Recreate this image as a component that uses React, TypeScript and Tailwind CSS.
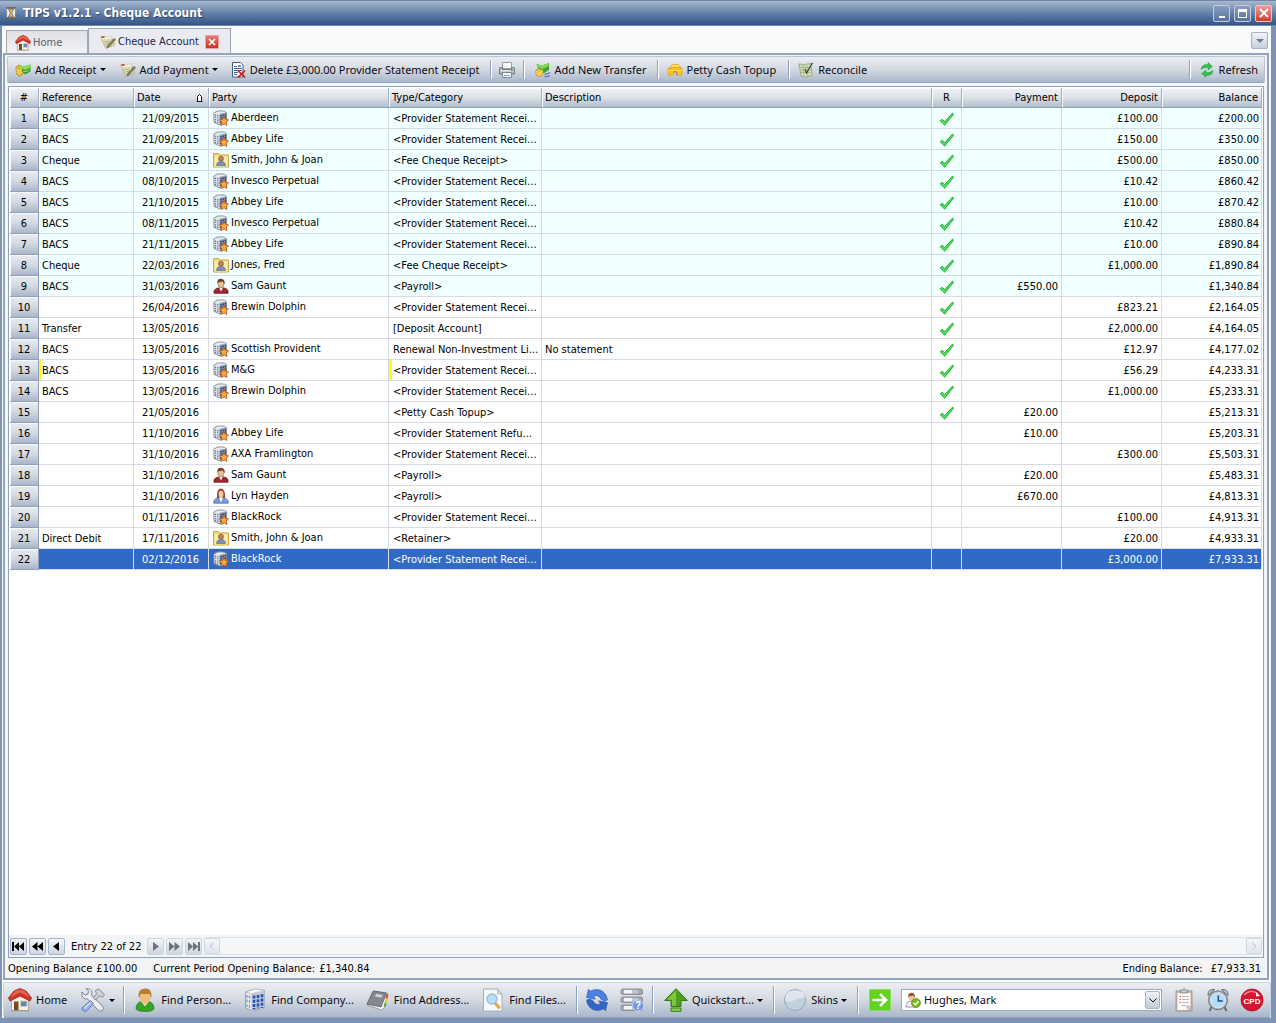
import React from 'react';

type IconProps = { className?: string };
type IconType = (props: IconProps) => React.JSX.Element;

function HouseIcon({ className }: IconProps) {
  return (
    <svg viewBox="0 0 24 24" className={className} aria-hidden="true">
      <path d="M3.500 10 12 6l8.500 4v12.500h-17z" fill="#f6f1e2" stroke="#b5a68c" />
      <path d="M6 3 12 .5 18 3l5.500 7-1.500 3L12 8 2 13 .5 10z" fill="#cf3527" stroke="#9c2219" strokeWidth=".8" />
      <path d="M6.500 3.500 12 1.300l5.500 2.200 4.500 6L12 4.500 2 9.500z" fill="#e56052" />
      <path d="M6 13.500h4.500v9H6z" fill="#7a4a24" />
      <path d="M12.500 13h6.500v5.500h-6.500z" fill="#5a86b8" stroke="#d8d2c2" />
      <path d="M3 22.800h18" stroke="#a3958a" />
    </svg>
  );
}

function ChequeIcon({ className }: IconProps) {
  return (
    <svg viewBox="0 0 16 16" className={className} aria-hidden="true">
      <path d="M.5 3 11 2.200 15 11l-9 3.500z" fill="#dcd9b8" stroke="#aaa67e" strokeWidth=".7" />
      <path d="M.5 3 11 2.200l.8 2L2 5.200z" fill="#f7f3e6" />
      <path d="M1 2.600 4 2l1 1.600-3 .6z" fill="#c0483a" />
      <path d="M4.500 8l5-1M5.500 10l4-1" stroke="#aaa57c" strokeWidth=".8" />
      <path d="m7 13.500.6-2L14 4.500l1.500 1.200-6.500 7z" fill="#8c8a58" stroke="#4d4c30" strokeWidth=".6" />
    </svg>
  );
}

function MoneyIcon({ className }: IconProps) {
  return (
    <svg viewBox="0 0 16 16" className={className} aria-hidden="true">
      <path d="M.8 5 4 3l4 2v7l-3.500 2.500L1.500 12z" fill="#e0b52c" stroke="#a37c14" strokeWidth=".6" />
      <path d="M1.500 7.500 4.500 9 7 7.800M1.500 10l3 1.500L7 10.300" stroke="#fff0a0" fill="none" strokeWidth=".8" />
      <path d="m4.500 3 4.500 1.500L15.500 2.500v7l-5 3L7 10V6z" fill="#3f9e2a" />
      <path d="m4.500 3 4.500 1.500 6.500-2-.5 3L10 8 6 6z" fill="#8fdc62" />
      <path d="M8 9.500h3l3-2" stroke="#b6f08c" strokeWidth=".8" fill="none" />
    </svg>
  );
}

function TransferIcon({ className }: IconProps) {
  return (
    <svg viewBox="0 0 16 16" className={className} aria-hidden="true">
      <path d="m1.500 2 5.500 1.500L14 1v7l-5 3-5-2z" fill="#3fa32c" />
      <path d="m1.500 2 5.500 1.500L14 1l-1 3.500L7.500 7 3 5z" fill="#7edb58" />
      <path d="M.8 8 4 6.500 8 8v4.500L4.500 14.500 1 13z" fill="#e7c038" stroke="#a6831a" strokeWidth=".6" />
      <path d="m1.500 9.500 3 1.200L7.500 9.500M1.500 11.700l3 1.200 3-1.200" stroke="#fbeea0" strokeWidth=".8" fill="none" />
      <path d="M9.500 14.500q3 .5 5.500-1M9.500 12q3 .5 5.500-1.500" stroke="#4f7fc4" strokeWidth="1.300" fill="none" />
    </svg>
  );
}

function DeleteDocIcon({ className }: IconProps) {
  return (
    <svg viewBox="0 0 16 16" className={className} aria-hidden="true">
      <path d="M2.500.5h8l2.500 2.500v12H2.500z" fill="#fff" stroke="#41618a" />
      <path d="M4 4.500h3M4 6.500h8M4 8.500h8M4 10.500h4M4 12.500h3" stroke="#44648e" />
      <path d="M8 3h3v2H8z" fill="#6a8ab2" />
      <path d="m8 8.500 7 7M15 8.500l-7 7" stroke="#d01c14" strokeWidth="1.700" />
    </svg>
  );
}

function PrinterIcon({ className }: IconProps) {
  return (
    <svg viewBox="0 0 16 16" className={className} aria-hidden="true">
      <path d="M3.500.5h9v6h-9z" fill="#f8f8f8" stroke="#9a9ea4" />
      <path d="M.5 6.500q0-1 1-1h2v2h9v-2h2q1 0 1 1v5.500H.5z" fill="#b0b4ba" stroke="#767b83" />
      <path d="M1.500 8h13v1.500h-13z" fill="#e4e7ea" />
      <path d="M3.500 10.500h9v5h-9z" fill="#f3f8ff" stroke="#80858d" />
      <path d="M5 13.500h6" stroke="#6faedc" />
      <path d="M12 8.500h2" stroke="#45ae36" />
    </svg>
  );
}

function PurseIcon({ className }: IconProps) {
  return (
    <svg viewBox="0 0 16 16" className={className} aria-hidden="true">
      <path d="M2.500 6 5 2.500h6.500L14 6z" fill="#ffd964" stroke="#e3a81c" strokeWidth=".7" />
      <path d="M.8 6.500q7-2 14.400 0l-.4 6.500H10v-3H6.500v3H1.200z" fill="#fbc223" stroke="#dd9f10" strokeWidth=".7" />
      <path d="M1 8.500h14" stroke="#ffe68a" strokeWidth=".7" />
      <path d="M7 9q2.500-.5 3 4.500" fill="none" stroke="#8b7238" strokeWidth=".8" />
    </svg>
  );
}

function ReconcileIcon({ className }: IconProps) {
  return (
    <svg viewBox="0 0 16 16" className={className} aria-hidden="true">
      <path d="m.8 2 5 .5 7-1 1.500 12-7 1.500-4-.5z" fill="#d3dcba" stroke="#8f9e7c" strokeWidth=".8" />
      <path d="M2 5.500h10M2.500 8h10M3 10.500h10M5 3l1 11M9 3l1 11" stroke="#9fb08a" strokeWidth=".8" />
      <path d="m7 7 1.500 4L14.500.8" fill="none" stroke="#35482a" strokeWidth="1.200" />
    </svg>
  );
}

function RefreshIcon({ className }: IconProps) {
  return (
    <svg viewBox="0 0 16 16" className={className} aria-hidden="true">
      <path d="M2 7.500Q2.500 2 9 2.500V.5l4.500 4L9 8V5.500Q5 5 2 7.500z" fill="#35c04d" stroke="#1e8f38" strokeWidth=".4" />
      <path d="M14 8.500q-.5 5.500-7 5v2l-4.500-4L7 8v2.500q4 .5 7-2z" fill="#35c04d" stroke="#1e8f38" strokeWidth=".4" />
    </svg>
  );
}

function HourglassIcon({ className }: IconProps) {
  return (
    <svg viewBox="0 0 12 12" className={className} aria-hidden="true">
      <path d="M2 1h8v10H2z" fill="#f3f3f3" stroke="#b9b9b9" strokeWidth=".5" />
      <path d="M1.500 1h9M1.500 11h9" stroke="#6b5a38" strokeWidth="1.500" />
      <path d="M3.500 2h5L6.800 6l1.700 4h-5l1.700-4z" fill="#f4b62c" stroke="#4f6f9c" strokeWidth=".8" />
    </svg>
  );
}

function ProviderIcon({ className }: IconProps) {
  return (
    <svg viewBox="0 0 16 16" className={className} aria-hidden="true">
      <path d="M.8 3Q4 .5 8 .8q4 0 5.500 1.700v10L7 15l-6-2.500z" fill="#e4e7ec" stroke="#7a818d" strokeWidth=".8" />
      <path d="m6.500 4 7-1.500v10L6.500 15z" fill="#8e97a6" />
      <path d="M2.500 4.500v8M4.800 5v8" stroke="#6b7c99" strokeWidth="1.300" strokeDasharray="1.400 .8" />
      <path d="M8 5v8M10.200 4.500v6M12.400 4v5" stroke="#284a86" strokeWidth="1.500" strokeDasharray="1.500 .7" />
      <path d="m11 6.500 1.400 2.900 3.200.4-2.300 2.300.6 3.400-2.900-1.600-2.900 1.600.6-3.400-2.400-2.300 3.300-.4z" fill="#fba641" stroke="#bd5212" strokeWidth=".8" />
    </svg>
  );
}

function ClientFolderIcon({ className }: IconProps) {
  return (
    <svg viewBox="0 0 16 16" className={className} aria-hidden="true">
      <path d="M.5 1.500h5l1 1.500h9v12H.5z" fill="#f3d777" stroke="#c9a646" />
      <path d="M1.500 4h13v10.500h-13z" fill="#fbebac" />
      <path d="M3.500 13.500q0-4 4.500-4t4.500 4z" fill="#7a93b8" stroke="#4d648a" strokeWidth=".6" />
      <circle cx="8" cy="6.700" r="2.600" fill="#b98252" stroke="#7a5430" strokeWidth=".5" />
    </svg>
  );
}

function ManIcon({ className }: IconProps) {
  return (
    <svg viewBox="0 0 16 16" className={className} aria-hidden="true">
      <path d="M1 15.200V13q1-3 7-3.200t7 3.200v2.200z" fill="#a8242c" stroke="#5f1218" strokeWidth=".8" />
      <path d="M6 9.500h4l-2 4z" fill="#fff" />
      <ellipse cx="8" cy="5.700" rx="3" ry="3.900" fill="#efc096" stroke="#8b5a38" strokeWidth=".5" />
      <path d="M4.300 6Q3.800.5 8 .7T11.700 6Q10 4.500 9.500 3.200 7 4.500 5.500 4z" fill="#78402a" />
    </svg>
  );
}

function WomanIcon({ className }: IconProps) {
  return (
    <svg viewBox="0 0 16 16" className={className} aria-hidden="true">
      <path d="M4 10Q3.500.5 8 .6t4 9.400z" fill="#8c4a30" />
      <path d="M.8 15.200V13q1-3 7.200-3.500 6.200.5 7.200 3.500v2.200z" fill="#7b9ade" stroke="#435fa8" strokeWidth=".7" />
      <path d="M6 9.500h4l-2 5z" fill="#fff" />
      <ellipse cx="8" cy="6.200" rx="2.400" ry="3.400" fill="#f3c9a4" />
    </svg>
  );
}

function TickIcon({ className }: IconProps) {
  return (
    <svg viewBox="0 0 16 16" className={className} role="img" aria-label="Reconciled">
      <path d="m1.200 9.800 1.900-1.500 2.600 2.300 7.800-8.500 1.200 1L5.700 14.200z" fill="#4be455" stroke="#149a24" strokeWidth=".8" />
    </svg>
  );
}

function ToolsIcon({ className }: IconProps) {
  return (
    <svg viewBox="0 0 24 24" className={className} aria-hidden="true">
      <path d="m1 4 3 3 3-1 .5-3L5 .8q5-.8 6 3.700l-.5 2.500L21 17.500q3 3 .5 5t-5-1L6.500 11Q2 11.500.8 7z" fill="#e6e8ec" stroke="#777b84" strokeWidth=".9" />
      <path d="m12.500 9.500 3.500-4-2-2.300L17.500.8l6 6-2.500 2.700-2-2-4.500 4.500z" fill="#cfd2d8" stroke="#777b84" strokeWidth=".9" />
      <path d="m9.500 12.500 3 3-7.500 8Q1 23.500 1 20z" fill="#9db8ee" stroke="#5573b4" strokeWidth=".9" />
      <path d="m3.500 20 6-5.500M7 8.500 18.500 20" stroke="#fff" />
    </svg>
  );
}

function PersonIcon({ className }: IconProps) {
  return (
    <svg viewBox="0 0 24 24" className={className} aria-hidden="true">
      <path d="M3 21q0-6.500 5.500-7.500h7Q21 14.500 21 21q-2 2.500-9 2.500T3 21z" fill="#35a326" stroke="#1c7014" strokeWidth=".6" />
      <path d="m8 13.500 4 5 4-5z" fill="#f1d5a8" />
      <ellipse cx="12" cy="8.500" rx="5.500" ry="7" fill="#f0bd80" />
      <path d="M5.800 10Q4.300.8 12 .6T18.200 10q-1-1-1.500-4.500-5 1.500-9 0Q7.300 9 5.800 10z" fill="#b97d30" />
    </svg>
  );
}

function CompanyIcon({ className }: IconProps) {
  return (
    <svg viewBox="0 0 24 24" className={className} aria-hidden="true">
      <path d="m2.500 4 10-3 9 1.500V20l-11 3-8-3z" fill="#e9ebef" stroke="#8c939f" strokeWidth=".8" />
      <path d="M8.500 5.500 21.500 3v17L8.500 23z" fill="#c4cad3" />
      <path d="M4 7v12M6.500 7.500v13" stroke="#8797b2" strokeWidth="1.300" strokeDasharray="3 1.600" />
      <path d="M11 7.500v14M15 7v13.500M19 6.300V20" stroke="#2256bc" strokeWidth="2.700" strokeDasharray="3 1.200" />
      <path d="m2.500 4 10-3 9 1.500-13 3z" fill="#fff" stroke="#a4abb5" strokeWidth=".6" />
    </svg>
  );
}

function AddressIcon({ className }: IconProps) {
  return (
    <svg viewBox="0 0 24 24" className={className} aria-hidden="true">
      <path d="m1 17 6-14 14.500 2.500-3 14-3 2.500z" fill="#f5f5f5" stroke="#85888d" strokeWidth=".8" />
      <path d="m1 16 6.500-13 13 2-5.500 14z" fill="#85898f" stroke="#5b5f66" strokeWidth=".8" />
      <path d="m10 6 6.500 1-1 2.600-6.500-1z" fill="#d3d6da" />
      <path d="m20.500 6 2 .5-.8 4-2.200-.5z" fill="#e74c35" />
      <path d="m19.500 10.500 2 .5-.8 4-2.200-.5z" fill="#f3c12c" />
      <path d="m18.500 15 2 .5-.8 3.500-2.200-.5z" fill="#57b03a" />
    </svg>
  );
}

function FilesIcon({ className }: IconProps) {
  return (
    <svg viewBox="0 0 24 24" className={className} aria-hidden="true">
      <path d="M2.500 1h14l4.500 5v17H2.500z" fill="#f7f8fa" stroke="#a9aeb8" />
      <path d="M16.500 1v5H21z" fill="#d3d8e0" stroke="#a9aeb8" strokeWidth=".7" />
      <path d="m14 15 4 4.500" stroke="#e0a93c" strokeWidth="3" strokeLinecap="round" />
      <circle cx="11" cy="11" r="5" fill="#b4dff8" stroke="#a3bcd6" strokeWidth="1.500" />
    </svg>
  );
}

function SyncIcon({ className }: IconProps) {
  return (
    <svg viewBox="0 0 24 24" className={className} aria-hidden="true">
      <path d="m3.500 1 1.500 2.200q7-3.500 12.500 0Q22 6.500 22.500 12l-3.500 1-3.200-2Q14 6.500 8.500 8l1.800 3.200L1.500 9.500z" fill="#4a80e0" stroke="#2a55ab" strokeWidth=".6" />
      <path d="m20.500 23-1.500-2.200q-7 3.500-12.500 0Q2 17.500 1.500 12L5 11l3.200 2q1.800 4.500 7.300 3l-1.800-3.200 8.800 1.700z" fill="#3464c4" stroke="#2a55ab" strokeWidth=".6" />
    </svg>
  );
}

function DatabaseIcon({ className }: IconProps) {
  return (
    <svg viewBox="0 0 24 24" className={className} aria-hidden="true">
      {[1, 9, 17].map((y) => (
        <g key={y}>
          <rect x="1" y={y} width="21.500" height="5.500" rx="1.500" fill="#a4a8af" stroke="#858a93" strokeWidth=".9" />
          <path d={`M4 ${y + 2.7}h8`} stroke="#f4f5f7" strokeWidth="3.500" />
          <path d={`M12 ${y + 2.7}h6`} stroke="#c4c8ce" strokeWidth="3.500" />
        </g>
      ))}
      <circle cx="18" cy="17.500" r="5.500" fill="#7397de" stroke="#c3d5f8" />
      <text x="18" y="21" textAnchor="middle" fontSize="10" fontWeight="700" fill="#fff" fontFamily="Liberation Sans, sans-serif">?</text>
    </svg>
  );
}

function UpArrowIcon({ className }: IconProps) {
  return (
    <svg viewBox="0 0 24 24" className={className} aria-hidden="true">
      <path d="M12 .7 23.300 12.500H17V18.500H7v-6H.7z" fill="#4d9f20" stroke="#347a12" />
      <path d="M12 2.300v15.500H8v-6H3z" fill="#7fc83c" />
      <path d="M7 20h10v3.300H7z" fill="#8fd052" stroke="#347a12" />
    </svg>
  );
}

function SkinIcon({ className }: IconProps) {
  return (
    <svg viewBox="0 0 24 24" className={className} aria-hidden="true">
      <circle cx="12" cy="12" r="10.500" fill="#c3d0dd" stroke="#8fa3b8" strokeWidth=".9" />
      <path d="M2.300 13Q1.500 2.300 12 2.300T21.700 10Q17 9 12 12t-9.700 1z" fill="#dde6ee" />
    </svg>
  );
}

function GoIcon({ className }: IconProps) {
  return (
    <svg viewBox="0 0 22 22" className={className} aria-hidden="true">
      <rect x=".5" y=".5" width="21" height="21" rx="1" fill="#62d31f" stroke="#8fdc5c" />
      <path d="M3.500 11h13M11 5l6 6-6 6" fill="none" stroke="#fff" strokeWidth="2.600" />
    </svg>
  );
}

function UserOkIcon({ className }: IconProps) {
  return (
    <svg viewBox="0 0 16 16" className={className} aria-hidden="true">
      <path d="M1 15q0-6 5.500-6T12 15z" fill="#edf0f6" stroke="#6b7690" strokeWidth=".7" />
      <ellipse cx="6.500" cy="5.500" rx="2.800" ry="3.500" fill="#f0c498" />
      <path d="M3.300 6Q2.500.8 6.500.8T9.700 6Q8.500 5 8.500 3.500q-2 1-4 .5z" fill="#96582e" />
      <circle cx="11" cy="11" r="4.500" fill="#7cb51c" stroke="#4d7c0c" strokeWidth=".6" />
      <path d="m8.500 11 2 2 3-3.700" fill="none" stroke="#fff" strokeWidth="1.500" />
    </svg>
  );
}

function ClipboardIcon({ className }: IconProps) {
  return (
    <svg viewBox="0 0 24 24" className={className} aria-hidden="true">
      <path d="M4 3h16v20H4z" fill="#cbb9a8" stroke="#9d8c7d" strokeWidth=".8" />
      <path d="M5.500 5h13v13l-3 4h-10z" fill="#faf9f6" />
      <path d="M8.500 3V2h2Q12-.8 13.500 2h2v3h-7z" fill="#c4c8cd" stroke="#787b80" strokeWidth=".7" />
      <path d="M10 8.500h7M10 11.500h7M10 14.500h7M10 17.500h4" stroke="#a7acb3" strokeWidth=".8" />
      <path d="M7.500 8.500H9M7.500 11.500H9M7.500 14.500H9" stroke="#dc6048" />
      <path d="M18.500 17.500h-4V22z" fill="#b8bec7" />
    </svg>
  );
}

function ClockIcon({ className }: IconProps) {
  return (
    <svg viewBox="0 0 24 24" className={className} aria-hidden="true">
      <path d="m5.500 19-2 4M18.500 19l2 4" stroke="#666a71" strokeWidth="2" />
      <path d="M2 7.500Q1.500 1 8.500 1.500zM22 7.500Q22.500 1 15.500 1.500z" fill="#c9ccd1" stroke="#666a71" />
      <circle cx="12" cy="12.300" r="9.500" fill="#a9adb4" stroke="#5f646c" strokeWidth=".8" />
      <circle cx="12" cy="12.300" r="7.500" fill="#b3defa" stroke="#e3eaf0" />
      <path d="M12.300 7.500v5.500h4.500" fill="none" stroke="#2b4a78" strokeWidth="1.500" />
    </svg>
  );
}

function CpdIcon({ className }: IconProps) {
  return (
    <svg viewBox="0 0 24 24" className={className} role="img" aria-label="CPD">
      <circle cx="12" cy="12" r="11" fill="#da1430" stroke="#a80c22" strokeWidth=".8" />
      <path d="M4 7q7-7 14-1" fill="none" stroke="#f3808c" strokeWidth="1.500" />
      <path d="m16 4 4 4-4 .5z" fill="#fff" />
      <text x="12" y="15.500" textAnchor="middle" fontSize="8" fontWeight="700" fill="#fff" fontFamily="Liberation Sans, sans-serif">CPD</text>
    </svg>
  );
}

function DownCaret() {
  return (
    <svg viewBox="0 0 6 3" className="w-[6px] h-[3px] shrink-0" aria-hidden="true">
      <path d="M0 0h6L3 3z" fill="#000" />
    </svg>
  );
}

type Entry = {
  ref?: string;
  date: string;
  icon?: IconType;
  party?: string;
  type: string;
  desc?: string;
  rec?: boolean;
  payment?: string;
  deposit?: string;
  balance: string;
  flagged?: boolean;
};

const RECEIPT = '<Provider Statement Recei...';

const entries: Entry[] = [
  { ref: 'BACS', date: '21/09/2015', icon: ProviderIcon, party: 'Aberdeen', type: RECEIPT, rec: true, deposit: '£100.00', balance: '£200.00' },
  { ref: 'BACS', date: '21/09/2015', icon: ProviderIcon, party: 'Abbey Life', type: RECEIPT, rec: true, deposit: '£150.00', balance: '£350.00' },
  { ref: 'Cheque', date: '21/09/2015', icon: ClientFolderIcon, party: 'Smith, John & Joan', type: '<Fee Cheque Receipt>', rec: true, deposit: '£500.00', balance: '£850.00' },
  { ref: 'BACS', date: '08/10/2015', icon: ProviderIcon, party: 'Invesco Perpetual', type: RECEIPT, rec: true, deposit: '£10.42', balance: '£860.42' },
  { ref: 'BACS', date: '21/10/2015', icon: ProviderIcon, party: 'Abbey Life', type: RECEIPT, rec: true, deposit: '£10.00', balance: '£870.42' },
  { ref: 'BACS', date: '08/11/2015', icon: ProviderIcon, party: 'Invesco Perpetual', type: RECEIPT, rec: true, deposit: '£10.42', balance: '£880.84' },
  { ref: 'BACS', date: '21/11/2015', icon: ProviderIcon, party: 'Abbey Life', type: RECEIPT, rec: true, deposit: '£10.00', balance: '£890.84' },
  { ref: 'Cheque', date: '22/03/2016', icon: ClientFolderIcon, party: 'Jones, Fred', type: '<Fee Cheque Receipt>', rec: true, deposit: '£1,000.00', balance: '£1,890.84' },
  { ref: 'BACS', date: '31/03/2016', icon: ManIcon, party: 'Sam Gaunt', type: '<Payroll>', rec: true, payment: '£550.00', balance: '£1,340.84' },
  { date: '26/04/2016', icon: ProviderIcon, party: 'Brewin Dolphin', type: RECEIPT, rec: true, deposit: '£823.21', balance: '£2,164.05' },
  { ref: 'Transfer', date: '13/05/2016', type: '[Deposit Account]', rec: true, deposit: '£2,000.00', balance: '£4,164.05' },
  { ref: 'BACS', date: '13/05/2016', icon: ProviderIcon, party: 'Scottish Provident', type: 'Renewal Non-Investment Li...', desc: 'No statement', rec: true, deposit: '£12.97', balance: '£4,177.02' },
  { ref: 'BACS', date: '13/05/2016', icon: ProviderIcon, party: 'M&G', type: RECEIPT, rec: true, deposit: '£56.29', balance: '£4,233.31', flagged: true },
  { ref: 'BACS', date: '13/05/2016', icon: ProviderIcon, party: 'Brewin Dolphin', type: RECEIPT, rec: true, deposit: '£1,000.00', balance: '£5,233.31' },
  { date: '21/05/2016', type: '<Petty Cash Topup>', rec: true, payment: '£20.00', balance: '£5,213.31' },
  { date: '11/10/2016', icon: ProviderIcon, party: 'Abbey Life', type: '<Provider Statement Refu...', payment: '£10.00', balance: '£5,203.31' },
  { date: '31/10/2016', icon: ProviderIcon, party: 'AXA Framlington', type: RECEIPT, deposit: '£300.00', balance: '£5,503.31' },
  { date: '31/10/2016', icon: ManIcon, party: 'Sam Gaunt', type: '<Payroll>', payment: '£20.00', balance: '£5,483.31' },
  { date: '31/10/2016', icon: WomanIcon, party: 'Lyn Hayden', type: '<Payroll>', payment: '£670.00', balance: '£4,813.31' },
  { date: '01/11/2016', icon: ProviderIcon, party: 'BlackRock', type: RECEIPT, deposit: '£100.00', balance: '£4,913.31' },
  { ref: 'Direct Debit', date: '17/11/2016', icon: ClientFolderIcon, party: 'Smith, John & Joan', type: '<Retainer>', deposit: '£20.00', balance: '£4,933.31' },
  { date: '02/12/2016', icon: ProviderIcon, party: 'BlackRock', type: RECEIPT, deposit: '£3,000.00', balance: '£7,933.31' },
];

const columns = [
  { label: '#', width: 'w-[29px]', align: 'text-center' },
  { label: 'Reference', width: 'w-[95px]', align: 'text-left' },
  { label: 'Date', width: 'w-[75px]', align: 'text-left' },
  { label: 'Party', width: 'w-[180px]', align: 'text-left' },
  { label: 'Type/Category', width: 'w-[153px]', align: 'text-left' },
  { label: 'Description', width: '', align: 'text-left' },
  { label: 'R', width: 'w-[30px]', align: 'text-center' },
  { label: 'Payment', width: 'w-[100px]', align: 'text-right' },
  { label: 'Deposit', width: 'w-[100px]', align: 'text-right' },
  { label: 'Balance', width: 'w-[100px]', align: 'text-right' },
];

function Separator() {
  return <div className="w-[2px] self-stretch shrink-0 bg-[#8fa3c0] border-r border-white my-[3px]" />;
}

function ToolButton({ icon: Icon, label, caret, name, className = '' }: { icon: IconType; label?: string; caret?: boolean; name?: string; className?: string }) {
  return (
    <button className={`flex items-center gap-1 shrink-0 whitespace-nowrap ${className}`} aria-label={name}>
      <Icon className="w-4 h-4" />
      <span className="flex items-center gap-[3px]">
        {label}
        {caret && <DownCaret />}
      </span>
    </button>
  );
}

function DockButton({ icon: Icon, label, caret, name, className = '' }: { icon: IconType; label?: string; caret?: boolean; name?: string; className?: string }) {
  return (
    <button className={`flex items-center gap-1 shrink-0 whitespace-nowrap ${className}`} aria-label={name}>
      <Icon className="w-6 h-6" />
      {(label || caret) && (
        <span className="flex items-center gap-[3px]">
          {label}
          {caret && <DownCaret />}
        </span>
      )}
    </button>
  );
}

function NavButton({ d, name, disabled }: { d: string; name: string; disabled?: boolean }) {
  return (
    <button
      aria-label={name}
      disabled={disabled}
      className={`w-[17px] h-[17px] flex items-center justify-center rounded-[2px] border bg-linear-to-b from-[#f4f6f9] to-[#ccd5e1] ${disabled ? 'border-[#cdd6e2] text-[#6d7178]' : 'border-[#a5b4c9] text-black'}`}
    >
      <svg viewBox="0 0 13 11" className="w-[13px] h-[11px]" aria-hidden="true">
        <path d={d} fill="currentColor" />
      </svg>
    </button>
  );
}

function ScrollButton({ d, name }: { d: string; name: string }) {
  return (
    <button aria-label={name} disabled className="w-4 h-4 flex items-center justify-center shrink-0 rounded-[2px] border border-[#d0d8e3] bg-linear-to-b from-[#f5f7fa] to-[#dfe5ed]">
      <svg viewBox="0 0 8 8" className="w-2 h-2" aria-hidden="true">
        <path d={d} fill="none" stroke="#b7c2d0" />
      </svg>
    </button>
  );
}

function TitleBar() {
  return (
    <header className="h-[26px] shrink-0 flex items-center pl-[5px] pr-1 gap-1 border-t border-[#7087a9] border-b border-b-[#6e86aa] bg-linear-to-b from-[#a9b8ce] via-[#6580a8] to-[#355586]">
      <HourglassIcon className="w-3 h-3" />
      <h1 className="flex-1 pl-[2px] text-[12px] font-bold text-white [text-shadow:1px_1px_1px_#2c456e]">
        TIPS v1.2.1 - Cheque Account
      </h1>
      <button aria-label="Minimize" className="w-[17px] h-[17px] rounded-[2px] border border-[#c3cfdf] bg-linear-to-b from-[#8a9fbf] to-[#56749f] flex items-end justify-center pb-[3px]">
        <span className="w-[6px] h-[2px] bg-white" />
      </button>
      <button aria-label="Maximize" className="w-[17px] h-[17px] rounded-[2px] border border-[#c3cfdf] bg-linear-to-b from-[#8a9fbf] to-[#56749f] flex items-center justify-center">
        <span className="w-[9px] h-[9px] border border-t-3 border-white" />
      </button>
      <button aria-label="Close" className="w-[17px] h-[17px] rounded-[2px] border border-[#f2c5c5] bg-linear-to-b from-[#ee9a96] to-[#d3322d] flex items-center justify-center">
        <svg viewBox="0 0 10 10" className="w-[10px] h-[10px]" aria-hidden="true">
          <path d="m1 1 8 8M9 1 1 9" stroke="#fff" strokeWidth="2" />
        </svg>
      </button>
    </header>
  );
}

function TabStrip() {
  return (
    <nav className="h-[27px] shrink-0 flex items-end pl-[3px] pr-[3px] bg-[#f9fafc]">
      <a href="#home" className="w-[82px] h-[23px] flex items-center gap-[2px] pt-px pl-2 border border-b-0 border-[#a4a8b4] bg-linear-to-b from-[#dfe1e6] to-[#f1f2f5] text-[#5c6070]">
        <HouseIcon className="w-4 h-4" />
        Home
      </a>
      <div className="w-[143px] h-[25px] flex items-center gap-[2px] pt-[2px] pl-[11px] border border-b-0 border-[#a0a4b4] bg-[#eaebf0] text-[#23264a]">
        <ChequeIcon className="w-4 h-4" />
        <a href="#cheque-account" className="whitespace-nowrap">Cheque Account</a>
        <button aria-label="Close tab" className="ml-1 w-[14px] h-[14px] border border-[#e9a6a6] bg-linear-to-b from-[#ea7470] to-[#d22c28] flex items-center justify-center">
          <svg viewBox="0 0 8 8" className="w-2 h-2" aria-hidden="true">
            <path d="m1 1 6 6M7 1 1 7" stroke="#fff" strokeWidth="1.700" />
          </svg>
        </button>
      </div>
      <button aria-label="Tab list" className="ml-auto mb-1 w-[17px] h-[17px] flex items-center justify-center rounded-[2px] border border-[#a3b2c8] bg-linear-to-b from-[#f0f3f7] to-[#c6d0dd]">
        <svg viewBox="0 0 8 4" className="w-2 h-1" aria-hidden="true">
          <path d="M0 0h8L4 4z" fill="#737b8b" />
        </svg>
      </button>
    </nav>
  );
}

function Toolbar() {
  return (
    <div className="h-[27px] shrink-0 mx-[2px] flex items-center pl-[7px] pr-[6px] border border-[#b9c5d5] border-b-[#8fa2bd] rounded-[2px] bg-linear-to-b from-[#eceef2] via-[#d4d9e2] to-[#aab8cb] font-['Noto_Sans',sans-serif] text-[11px] text-[#0a0a12]">
      <ToolButton icon={MoneyIcon} label="Add Receipt" caret />
      <ToolButton icon={ChequeIcon} label="Add Payment" caret className="ml-[14px]" />
      <ToolButton icon={DeleteDocIcon} label="Delete £3,000.00 Provider Statement Receipt" className="ml-3 mr-[10px]" />
      <Separator />
      <ToolButton icon={PrinterIcon} name="Print" className="ml-[7px] mr-1" />
      <Separator />
      <ToolButton icon={TransferIcon} label="Add New Transfer" className="mx-[10px]" />
      <Separator />
      <ToolButton icon={PurseIcon} label="Petty Cash Topup" className="ml-2 mr-3" />
      <Separator />
      <ToolButton icon={ReconcileIcon} label="Reconcile" className="ml-2" />
      <div className="ml-auto flex self-stretch">
        <Separator />
        <ToolButton icon={RefreshIcon} label="Refresh" className="ml-2" />
      </div>
    </div>
  );
}

function LedgerTable() {
  return (
    <table className="w-full table-fixed border-separate border-spacing-0">
      <thead>
        <tr>
          {columns.map((col) => (
            <th
              key={col.label}
              className={`${col.width} ${col.align} h-5 p-0 px-[3px] font-normal border-r border-b border-[#a1b0c6] border-b-[#8ea0bb] bg-linear-to-b from-[#f0f2f5] via-[#dde1e8] to-[#b0bccd] shadow-[inset_1px_1px_0_#fafbfc]`}
            >
              {col.label === 'Date' ? (
                <span className="flex items-center justify-between pr-[2px]">
                  Date
                  <svg viewBox="0 0 7 8" className="w-[7px] h-2" aria-hidden="true">
                    <path d="M1.500 7.500v-5l2-2 2 2v5zM.5 7.500h6" fill="#fff" stroke="#111" />
                  </svg>
                </span>
              ) : (
                col.label
              )}
            </th>
          ))}
        </tr>
      </thead>
      <tbody>
        {entries.map((entry, idx) => {
          const selected = idx === entries.length - 1;
          const Icon = entry.icon;
          const tone = selected ? 'bg-[#316ac5] text-white' : idx < 9 ? 'bg-[#f0ffff]' : 'bg-white';
          const box = 'h-[21px] p-0 border-r border-b border-[#d5dce5] whitespace-nowrap overflow-hidden';
          const cell = `${box} pt-[2px]`;
          return (
            <tr key={idx} className={tone}>
              <th className="h-[21px] p-0 pt-[2px] text-center text-black font-normal border-r border-b border-[#8ea0bb] bg-linear-to-b from-[#e9ecf1] via-[#d3d9e2] to-[#a9b6c9] shadow-[inset_1px_1px_0_#f7f8fa]">
                {idx + 1}
              </th>
              <td className={`${cell} ${entry.flagged ? 'shadow-[inset_2px_0_0_#ffff00]' : ''} pl-[3px]`}>{entry.ref}</td>
              <td className={`${cell} text-right pr-[9px]`}>{entry.date}</td>
              <td className={`${box} pl-1`}>
                {Icon && (
                  <span className="flex items-center gap-[2px]">
                    <Icon className="w-4 h-4" />
                    {entry.party}
                  </span>
                )}
              </td>
              <td className={`${cell} ${entry.flagged ? 'shadow-[inset_3px_0_0_#ffff00]' : ''} pl-1`}>{entry.type}</td>
              <td className={`${cell} pl-[3px]`}>{entry.desc}</td>
              <td className={cell}>{entry.rec && <TickIcon className="w-4 h-4 mx-auto" />}</td>
              <td className={`${cell} text-right pr-[3px]`}>{entry.payment}</td>
              <td className={`${cell} text-right pr-[3px]`}>{entry.deposit}</td>
              <td className={`${cell} text-right pr-[2px]`}>{entry.balance}</td>
            </tr>
          );
        })}
      </tbody>
    </table>
  );
}

function Navigator() {
  return (
    <div className="h-[22px] shrink-0 flex items-center gap-[2px] pl-px pr-px bg-[#f3f4f6]">
      <NavButton name="First" d="M0 1h2v9H0zM7 1v9L2 5.500zM12 1v9L7 5.500z" />
      <NavButton name="Previous page" d="M6.500 1v9L1 5.500zM12 1v9L6.500 5.500z" />
      <NavButton name="Previous" d="M9 1v9L3 5.500z" />
      <span className="px-1 pt-px whitespace-nowrap">Entry 22 of 22</span>
      <NavButton name="Next" d="M4 1v9l6-4.500z" disabled />
      <NavButton name="Next page" d="M1 1v9l5.500-4.500zM6.500 1v9L12 5.500z" disabled />
      <NavButton name="Last" d="M1 1v9l5-4.500zM6 1v9l5-4.500zM11 1h2v9h-2z" disabled />
      <div className="flex-1 flex items-center justify-between border-y border-[#dce2ea] bg-[#f5f6f8]">
        <ScrollButton name="Scroll left" d="M5.500 1 2 4l3.500 3" />
        <ScrollButton name="Scroll right" d="M2.500 1 6 4 2.500 7" />
      </div>
    </div>
  );
}

function Dock() {
  return (
    <footer className="h-[36px] shrink-0 mt-[2px] flex items-center pl-1 pr-[6px] border border-[#ccd6e3] border-b-[#8fa2bd] rounded-[2px] bg-linear-to-b from-[#eceef2] via-[#d4d9e2] to-[#aab8cb] font-['Noto_Sans',sans-serif] text-[11px] text-[#0a0a12]">
      <DockButton icon={HouseIcon} label="Home" />
      <DockButton icon={ToolsIcon} name="Tools" caret className="ml-[14px] mr-2" />
      <Separator />
      <DockButton icon={PersonIcon} label="Find Person..." className="ml-2" />
      <DockButton icon={CompanyIcon} label="Find Company..." className="ml-3" />
      <DockButton icon={AddressIcon} label="Find Address..." className="ml-3" />
      <DockButton icon={FilesIcon} label="Find Files..." className="ml-3 mr-[10px]" />
      <Separator />
      <DockButton icon={SyncIcon} name="Synchronise" className="ml-[7px]" />
      <DockButton icon={DatabaseIcon} name="Database" className="ml-[11px] mr-2" />
      <Separator />
      <DockButton icon={UpArrowIcon} label="Quickstart..." caret className="mx-[10px]" />
      <Separator />
      <DockButton icon={SkinIcon} label="Skins" caret className="ml-2 mr-[10px]" />
      <Separator />
      <button aria-label="Go" className="mx-[10px] shrink-0">
        <GoIcon className="w-[22px] h-[22px]" />
      </button>
      <div className="flex-1 min-w-0 h-[22px] flex items-center pl-[3px] pr-px bg-white border border-[#9aabc3]">
        <UserOkIcon className="w-4 h-4 shrink-0" />
        <div className="relative flex-1 h-full">
          <select aria-label="Contact" className="w-full h-full appearance-none bg-transparent pl-[3px] pr-5">
            <option>Hughes, Mark</option>
          </select>
          <span className="pointer-events-none absolute inset-y-px right-0 w-[15px] flex items-center justify-center rounded-[2px] border border-[#a8b6ca] bg-linear-to-b from-[#eef1f5] to-[#c2ccda]">
            <svg viewBox="0 0 8 5" className="w-2 h-[5px]" aria-hidden="true">
              <path d="m.5.5 3.500 3.500L7.500.5" fill="none" stroke="#111" />
            </svg>
          </span>
        </div>
      </div>
      <DockButton icon={ClipboardIcon} name="Tasks" className="ml-[10px]" />
      <DockButton icon={ClockIcon} name="Reminders" className="ml-[10px]" />
      <DockButton icon={CpdIcon} name="CPD" className="ml-[10px]" />
    </footer>
  );
}

export default function App() {
  return (
    <div className="min-h-screen flex flex-col bg-[#7d93b5] font-['DejaVu_Sans_Condensed','DejaVu_Sans',sans-serif] text-[11px] leading-[14px] text-black">
      <TitleBar />
      <div className="flex-1 flex flex-col ml-[2px] mr-[5px] mb-[5px] border-l border-[#f9fafc] bg-[#f9fafc]">
        <TabStrip />
        <main className="flex-1 flex flex-col mr-[2px] border-2 border-[#94a4bd] bg-[#f3f4f6] pt-px">
          <Toolbar />
          <section className="flex-1 flex flex-col mt-[3px] ml-[3px] mr-[3px] border border-[#8fa2bd] bg-white">
            <div className="flex-1 p-px">
              <LedgerTable />
            </div>
            <Navigator />
          </section>
          <div className="h-5 shrink-0 flex items-center pt-[2px] pl-[3px] pr-[6px] whitespace-nowrap">
            <span>Opening Balance</span>
            <span className="ml-1">£100.00</span>
            <span className="ml-4">Current Period Opening Balance:</span>
            <span className="ml-1">£1,340.84</span>
            <span className="ml-auto">Ending Balance:</span>
            <span className="ml-2">£7,933.31</span>
          </div>
        </main>
        <Dock />
      </div>
    </div>
  );
}
